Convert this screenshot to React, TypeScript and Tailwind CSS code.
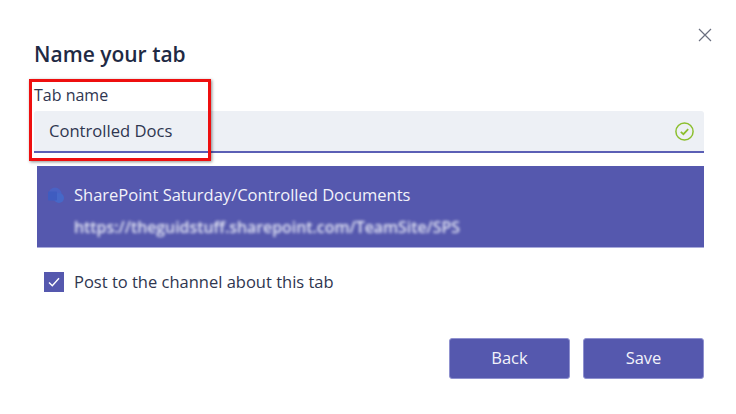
import React from "react";

export default function App() {
  return (
    <div className="relative flex h-[414px] w-[736px] flex-col overflow-hidden bg-white pl-[34px] pr-[32px] pt-[41px] font-['Open_Sans','Noto_Sans',sans-serif] text-[#252a41]">
      <svg className="absolute left-[698px] top-[28px]" width="14" height="14" viewBox="0 0 14 14" fill="none" stroke="#6b7080" strokeWidth="1.2">
        <path d="M1 1L13 13M13 1L1 13" />
      </svg>
      <h1 className="text-[21px] font-semibold leading-[27px] text-[#1f2a44]">Name your tab</h1>
      <label className="mt-[17px] text-[16px] leading-[20px] text-[#2f3650]">Tab name</label>
      <div className="mt-[6px] flex h-[42px] items-center justify-between rounded-t-[3px] border-b-2 border-[#5b5fb5] bg-[#edf0f5] pl-[15px] pr-[10px]">
        <span className="text-[16.6px] text-[#2f3650]">Controlled Docs</span>
        <svg width="19" height="19" viewBox="0 0 19 19" fill="none" stroke="#8cbf2e" strokeWidth="1.5">
          <circle cx="9.5" cy="9.5" r="8.6" />
          <path d="M5.8 9.8L8.4 12.2L13.2 7.2" strokeWidth="1.7" />
        </svg>
      </div>
      <div className="ml-[3px] mt-[13px] flex h-[82px] items-start gap-[9px] border-b border-[#a9abdb] bg-[#5558ae] pl-[11px] text-white">
        <svg className="mt-[21px] shrink-0" width="17" height="18" viewBox="0 0 17 18">
          <circle cx="7" cy="7" r="6.5" fill="#4a62c4" />
          <circle cx="11" cy="11" r="5" fill="#4668c8" />
          <rect x="0" y="4.5" width="9" height="9" rx="1" fill="#3f5cc0" />
        </svg>
        <div className="flex flex-col pt-[18px]">
          <span className="whitespace-nowrap text-[16.5px] leading-[22px] text-[#f2f2fa]">SharePoint Saturday/Controlled Documents</span>
          <span className="mt-[11px] whitespace-nowrap text-[15.85px] font-semibold leading-[20px] text-[#e6e8f6] blur-[1.4px]">https://theguidstuff.sharepoint.com/TeamSite/SPS</span>
        </div>
      </div>
      <div className="ml-[10px] mt-[24px] flex items-center gap-[10px]">
        <div className="flex h-[20px] w-[20px] items-center justify-center bg-[#5558ae]">
          <svg width="14" height="12" viewBox="0 0 14 12" fill="none" stroke="white" strokeWidth="1.4">
            <path d="M2 6.5L5.3 9.8L12 2.2" />
          </svg>
        </div>
        <span className="text-[16.5px] leading-[20px] text-[#2f3650]">Post to the channel about this tab</span>
      </div>
      <div className="mt-[46px] flex justify-end gap-[13px]">
        <button className="h-[41px] w-[121px] rounded-[3px] border border-[#8f91cf] bg-[#5558ae] text-[16.5px] text-[#f2f2fa]">Back</button>
        <button className="h-[41px] w-[121px] rounded-[3px] border border-[#8f91cf] bg-[#5558ae] text-[16.5px] text-[#f2f2fa]">Save</button>
      </div>
      <div className="absolute left-[29px] top-[79px] h-[82px] w-[182px] border-[3px] border-[#ee0f0f] shadow-[1px_1px_3px_rgba(0,0,0,0.45)]" />
    </div>
  );
}
